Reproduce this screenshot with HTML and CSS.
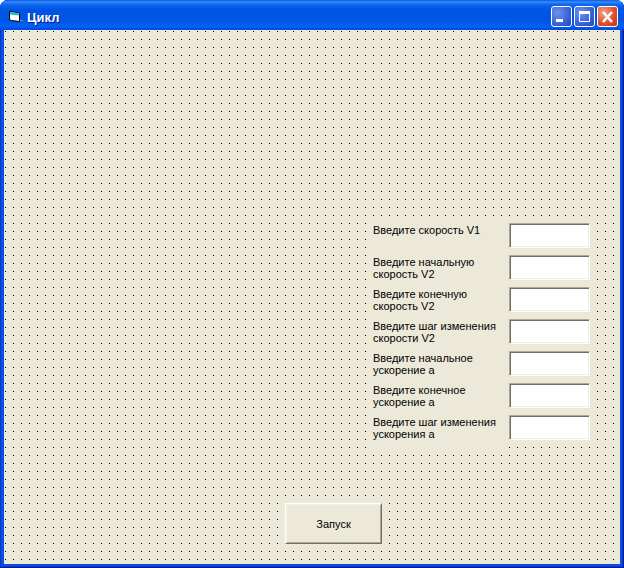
FILE: index.html
```html
<!DOCTYPE html>
<html lang="ru">
<head>
<meta charset="utf-8">
<title>Цикл</title>
<link rel="stylesheet" href="styles.css">
</head>
<body>
<div class="window">
  <div class="titlebar">
    <svg class="app-icon" width="16" height="16" viewBox="0 0 16 16">
      <path d="M1.500 2.500l8 1 2 1v8l-8-1-2-1z" fill="#fff" stroke="#000"/>
      <path d="M2 3l7.500 1 1.500 1.500v1l-9-1z" fill="#16c4c4"/>
      <path d="M12 11h3v1h-3z" fill="#8a8a8a"/>
    </svg>
    <span class="title">Цикл</span>
    <div class="controls">
      <div class="btn btn-blue">
        <svg width="21" height="21" viewBox="0 0 21 21"><rect x="5" y="13" width="7" height="3" fill="#fff"/></svg>
      </div>
      <div class="btn btn-blue">
        <svg width="21" height="21" viewBox="0 0 21 21"><path d="M5.500 6.500h10v9h-10z" fill="none" stroke="#fff"/><rect x="5" y="5" width="11" height="3" fill="#fff"/></svg>
      </div>
      <div class="btn btn-red">
        <svg width="21" height="21" viewBox="0 0 21 21"><path d="M6 6l9 10M15 6l-9 10" stroke="#fff" stroke-width="2.600" fill="none"/></svg>
      </div>
    </div>
  </div>
  <div class="client">
    <div class="form">
      <div class="row"><label class="label">Введите скорость V1</label><div class="input"></div></div>
      <div class="row"><label class="label">Введите начальную скорость V2</label><div class="input"></div></div>
      <div class="row"><label class="label">Введите конечную скорость V2</label><div class="input"></div></div>
      <div class="row"><label class="label">Введите шаг изменения скорости V2</label><div class="input"></div></div>
      <div class="row"><label class="label">Введите начальное ускорение а</label><div class="input"></div></div>
      <div class="row"><label class="label">Введите конечное ускорение а</label><div class="input"></div></div>
      <div class="row row-last"><label class="label">Введите шаг изменения ускорения а</label><div class="input"></div></div>
    </div>
    <div class="button-row"><div class="run">Запуск</div></div>
  </div>
</div>
</body>
</html>
```
FILE: styles.css
```css
html, body { margin: 0; padding: 0; }
body { width: 624px; height: 568px; overflow: hidden; font-family: "Liberation Sans", Arial, sans-serif; font-size: 11px; color: #000; background: #fff; }
.window { width: 624px; height: 568px; box-sizing: border-box; display: flex; flex-direction: column; background: #0a4fe4; padding: 0 4px 4px; border-radius: 8px 8px 0 0; box-shadow: inset -1px -1px 0 #001a9c, inset -2px -2px 0 #0639c8, inset 1px 0 0 #0338c4; }
.titlebar { height: 30px; flex: none; margin: 0 -4px; padding: 2px 6px 0 8px; box-sizing: border-box; display: flex; align-items: center; border-radius: 8px 8px 0 0;
  background: linear-gradient(180deg, #0a5ae8 0%, #3a8cf5 7%, #0e6cf2 13%, #0054e3 32%, #0055e5 70%, #0060f8 87%, #0049d8 100%); }
.app-icon { flex: none; margin-right: 2px; margin-top: 1px; }
.title { font-weight: bold; font-size: 13px; color: #fff; text-shadow: 1px 1px 0 #0a1883; margin-left: 1px; margin-top: 2px; }
.controls { margin-left: auto; display: flex; gap: 2px; margin-top: 1px; }
.btn { width: 21px; height: 21px; box-sizing: border-box; border: 1px solid #fff; border-radius: 3px; overflow: hidden; }
.btn svg { display: block; margin: -1px; }
.btn-blue { background: radial-gradient(circle at 30% 30%, #6f92ee 0%, #3a62d8 60%, #2343c0 100%); }
.btn-red { background: radial-gradient(circle at 30% 30%, #f0a58c 0%, #e0512f 55%, #c22f14 100%); }
.client { flex: 1; display: flex; flex-direction: column; align-items: flex-end; box-sizing: border-box; padding-top: 193px; background-color: #ece9d8;
  background-image: url("data:image/svg+xml,%3Csvg xmlns='http://www.w3.org/2000/svg' width='8' height='8'%3E%3Crect x='1' y='1' width='1' height='1' fill='%23000'/%3E%3C/svg%3E"); background-repeat: repeat; background-size: 8px 8px; }
.form { display: flex; flex-direction: column; width: 218px; margin-right: 30px; background: #ece9d8; }
.row { height: 32px; display: flex; justify-content: space-between; }
.label { width: 132px; padding-left: 1px; line-height: 12px; padding-top: 1px; box-sizing: border-box; background: #ece9d8; }
.row-last .label { height: 33px; }
.input { width: 81px; height: 25px; box-sizing: border-box; background: #fff; border: 1px solid; border-color: #aca899 #fff #fff #aca899; box-shadow: inset 1px 1px 0 #716f64, inset -1px -1px 0 #f1efe2; flex: none; }
.button-row { align-self: stretch; display: flex; padding: 56px 0 0 281px; }
.run { width: 97px; height: 41px; box-sizing: border-box; display: flex; align-items: center; justify-content: center; background: #ece9d8; border: 1px solid; border-color: #fff #716f64 #716f64 #fff; box-shadow: inset 1px 1px 0 #f1efe2, inset -1px -1px 0 #aca899; }
```
